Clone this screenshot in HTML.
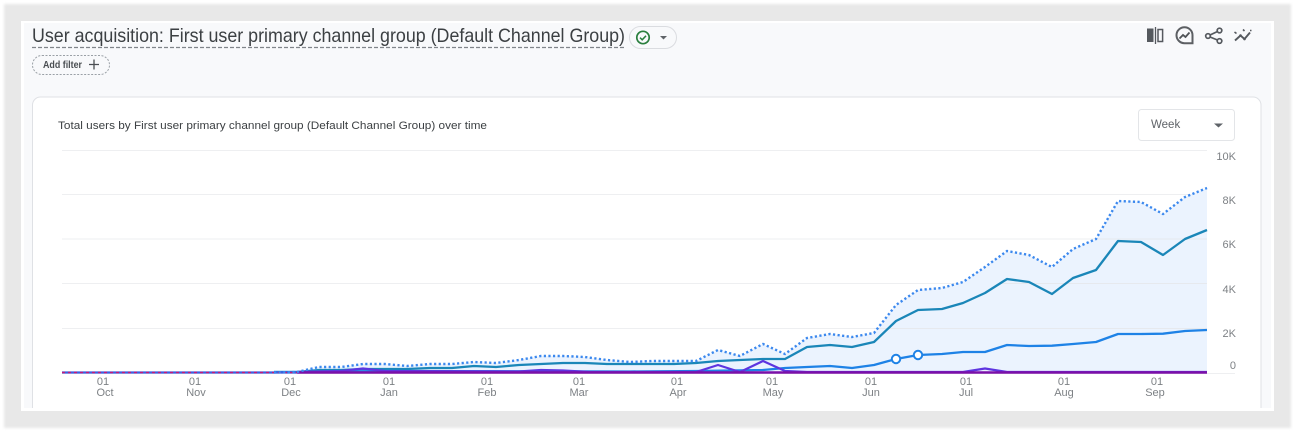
<!DOCTYPE html>
<html>
<head>
<meta charset="utf-8">
<style>
html,body{margin:0;padding:0;width:1295px;height:432px;overflow:hidden;background:#fff}
svg{display:block;filter:blur(.35px)}
text{font-family:"Liberation Sans",sans-serif}
</style>
</head>
<body>
<svg width="1295" height="432" viewBox="0 0 1295 432" xmlns="http://www.w3.org/2000/svg">
<defs>
<filter id="s" x="-5%" y="-5%" width="110%" height="110%"><feGaussianBlur stdDeviation="1.2"/></filter>
</defs>
<!-- frame -->
<rect x="0" y="0" width="1295" height="432" fill="#fff"/>
<rect x="4" y="4" width="1287" height="424" fill="#e8e8e8" filter="url(#s)"/>
<rect x="21" y="21" width="1253" height="390" fill="#fff"/>
<rect x="24" y="23" width="1247" height="385" fill="#f8f9fb"/>

<!-- title -->
<text x="32" y="42" font-size="19.500" fill="#3c4043" textLength="593" lengthAdjust="spacingAndGlyphs">User acquisition: First user primary channel group (Default Channel Group)</text>
<line x1="32" y1="47.500" x2="625" y2="47.500" stroke="#80858a" stroke-width="1.300" stroke-dasharray="4 2"/>

<!-- status chip -->
<rect x="629.500" y="26.500" width="47" height="22" rx="11" fill="#f8f9fb" stroke="#dadce0"/>
<circle cx="643" cy="37.500" r="6.200" fill="none" stroke="#2a7f3e" stroke-width="1.700"/>
<path d="M640 37.600l2.200 2.200 3.800-4" fill="none" stroke="#2a7f3e" stroke-width="1.500"/>
<path d="M660 36h7l-3.500 3.500z" fill="#5f6368"/>

<!-- add filter -->
<rect x="32.500" y="55.500" width="77" height="19" rx="9.500" fill="#f8f9fb" stroke="#9aa0a6" stroke-width="1" stroke-dasharray="2 1.500"/>
<text x="43" y="68" font-size="10" font-weight="700" fill="#4a4e52" textLength="39" lengthAdjust="spacingAndGlyphs">Add filter</text>
<path d="M94 59.500v10M89 64.500h10" stroke="#4a4e52" stroke-width="1.300" fill="none"/>

<!-- top right icons -->
<rect x="1147" y="28.500" width="6.500" height="13.500" fill="#55595e"/>
<line x1="1155.500" y1="27" x2="1155.500" y2="44" stroke="#55595e" stroke-width="1.300"/>
<rect x="1158" y="29.500" width="4.600" height="12" fill="none" stroke="#55595e" stroke-width="1.500"/>

<path d="M1192.500 43.200h-8a8 8 0 1 1 8-8z" fill="none" stroke="#5c5f63" stroke-width="2"/>
<path d="M1179.500 38.500l3.500-3.500 2.500 2 4-4.500" fill="none" stroke="#4f5357" stroke-width="1.800"/>

<circle cx="1219.500" cy="30.500" r="2.300" fill="none" stroke="#55595e" stroke-width="1.700"/>
<circle cx="1208" cy="36" r="2.300" fill="none" stroke="#55595e" stroke-width="1.700"/>
<circle cx="1219.500" cy="41" r="2.300" fill="none" stroke="#55595e" stroke-width="1.700"/>
<path d="M1210 35l7.500-3.500M1210 37l7.500 3" stroke="#55595e" stroke-width="1.700" fill="none"/>

<path d="M1235 40.500l5.500-5 4 3.500 5.500-6.500" fill="none" stroke="#55595e" stroke-width="1.900"/>
<circle cx="1240.500" cy="35.500" r="1.300" fill="#55595e"/>
<circle cx="1244.500" cy="39" r="1.300" fill="#55595e"/>
<path d="M1234.500 32l2 1.500M1243 29.500l1.500 1.500M1250 30.500h1.500" stroke="#55595e" stroke-width="1.600" fill="none"/>

<!-- card -->
<path d="M32.500 408V105a8 8 0 0 1 8-8H1253a8 8 0 0 1 8 8V408" fill="#fff" stroke="#dfe1e5"/>
<text x="58" y="129" font-size="11.300" fill="#3c4043" textLength="429" lengthAdjust="spacingAndGlyphs">Total users by First user primary channel group (Default Channel Group) over time</text>

<!-- week selector -->
<rect x="1138.500" y="109.500" width="96" height="31" rx="3" fill="#fff" stroke="#e3e5e8"/>
<text x="1151" y="128" font-size="11.500" fill="#5f6368">Week</text>
<path d="M1214 123.500h9l-4.500 4z" fill="#5f6368"/>

<!-- grid -->
<g stroke="#eeeff1" stroke-width="1" fill="none">
<line x1="62" y1="150.500" x2="1207" y2="150.500"/>
<line x1="62" y1="194.500" x2="1207" y2="194.500"/>
<line x1="62" y1="239" x2="1207" y2="239"/>
<line x1="62" y1="283.500" x2="1207" y2="283.500"/>
<line x1="62" y1="328.500" x2="1207" y2="328.500"/>
<line x1="62" y1="373.500" x2="1235" y2="373.500"/>
</g>

<!-- area -->
<path fill="#ebf3fe" d="M274 372.500L297 372L319 367L341 367L363 364L385 364L407 366L430 364L452 364L474 362L496 363L519 360L541 356L563 356L585 357L607 360L630 362L652 361L674 361L696 361L718 350L740 356L763 344L785 354L807 338L830 334L852 337L874 333L896 305L918 290L942 288L963 282L985 267L1007 251L1029 255L1052 267L1073 249L1096 239L1118 201L1141 202L1163 214L1185 197L1207 188V372.500Z"/>
<g stroke="#e6e9ee" stroke-width="1" fill="none">
<line x1="874" y1="328.500" x2="1207" y2="328.500"/>
<line x1="1000" y1="283.500" x2="1207" y2="283.500"/>
<line x1="1096" y1="239" x2="1207" y2="239"/>
</g>

<!-- teal -->
<polyline fill="none" stroke="#1a86b8" stroke-width="2.300" stroke-linejoin="round" points="274,372 297,372 319,370 341,370 363,369 385,369 407,369 430,368 452,368 474,366 496,367 519,365 541,364 563,363 585,363 607,364 630,364 652,364 674,364 696,363 718,361 740,360 763,359 785,359 807,347 830,345 852,347 874,342 896,321 918,310 942,309 963,303 985,293 1007,279 1029,282 1052,294 1073,278 1096,270 1118,241 1141,242 1163,255 1185,239 1207,230"/>
<!-- blue -->
<polyline fill="none" stroke="#1e82e6" stroke-width="2.300" stroke-linejoin="round" points="274,372 297,372 385,371 630,371.500 697,371 763,370 785,368 807,367 830,366 852,368 874,365 896,359 918,355 942,354 963,352 985,352 1007,345 1029,346 1052,345.700 1073,344 1096,342 1118,334 1141,334 1163,333.700 1185,331 1207,330"/>
<!-- violet -->
<polyline fill="none" stroke="#5e35e0" stroke-width="2.200" stroke-linejoin="round" points="297,372 341,371 363,368.500 385,371 519,371.500 541,370 563,370.500 590,372 696,372 718,365 740,372 763,361 785,371 807,372 963,372 985,368.500 1007,372 1207,372"/>
<!-- purple -->
<polyline fill="none" stroke="#7b10a8" stroke-width="2.400" points="297,372.500 1207,372.500"/>
<!-- baseline left -->
<line x1="62" y1="372.500" x2="297" y2="372.500" stroke="#3a5fe0" stroke-width="2.200"/>
<line x1="62" y1="372.500" x2="297" y2="372.500" stroke="#c2187a" stroke-width="1.400" stroke-dasharray="3 3"/>
<!-- dotted -->
<polyline fill="none" stroke="#3b88ee" stroke-width="2.400" stroke-dasharray="2.200 2.400" points="274,372.500 297,372 319,367 341,367 363,364 385,364 407,366 430,364 452,364 474,362 496,363 519,360 541,356 563,356 585,357 607,360 630,362 652,361 674,361 696,361 718,350 740,356 763,344 785,354 807,338 830,334 852,337 874,333 896,305 918,290 942,288 963,282 985,267 1007,251 1029,255 1052,267 1073,249 1096,239 1118,201 1141,202 1163,214 1185,197 1207,188"/>

<!-- markers -->
<circle cx="896" cy="359" r="4.200" fill="#fff" stroke="#1e82e6" stroke-width="2"/>
<circle cx="918" cy="355" r="4.200" fill="#fff" stroke="#1e82e6" stroke-width="2"/>

<!-- y labels -->
<g font-size="11" fill="#7d8185" text-anchor="end">
<text x="1236" y="160">10K</text>
<text x="1236" y="204">8K</text>
<text x="1236" y="248">6K</text>
<text x="1236" y="293">4K</text>
<text x="1236" y="337">2K</text>
<text x="1236" y="369">0</text>
</g>

<!-- x labels -->
<g font-size="11" fill="#7d8185" text-anchor="middle">
<text x="103" y="385">01</text><text x="105" y="396">Oct</text>
<text x="195" y="385">01</text><text x="196" y="396">Nov</text>
<text x="290" y="385">01</text><text x="291" y="396">Dec</text>
<text x="389" y="385">01</text><text x="389" y="396">Jan</text>
<text x="487" y="385">01</text><text x="487" y="396">Feb</text>
<text x="579" y="385">01</text><text x="579" y="396">Mar</text>
<text x="677" y="385">01</text><text x="678" y="396">Apr</text>
<text x="772" y="385">01</text><text x="773" y="396">May</text>
<text x="871" y="385">01</text><text x="871" y="396">Jun</text>
<text x="966" y="385">01</text><text x="966" y="396">Jul</text>
<text x="1064" y="385">01</text><text x="1064" y="396">Aug</text>
<text x="1157" y="385">01</text><text x="1155" y="396">Sep</text>
</g>
</svg>
</body>
</html>
